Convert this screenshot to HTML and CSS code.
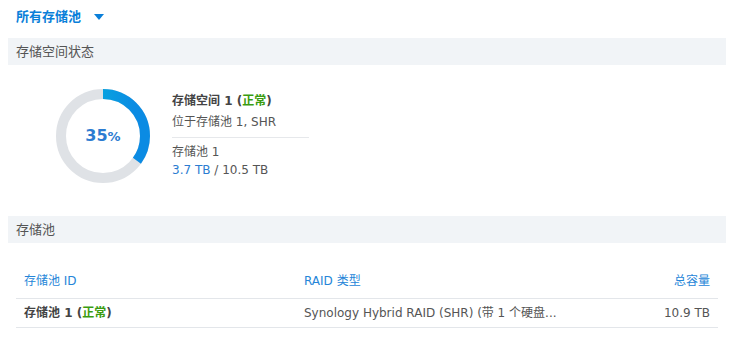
FILE: index.html
```html
<!DOCTYPE html>
<html lang="zh-CN">
<head>
    <meta charset="UTF-8">
    <title>存储池</title>
    <link rel="stylesheet" href="styles.css">
</head>
<body>
    <div class="page">
        <div class="title">
            <span>所有存储池</span>
            <span class="caret"></span>
        </div>

        <div class="section-head">存储空间状态</div>
        <div class="status">
            <div class="donut">
                <svg width="96" height="96" viewBox="0 0 96 96">
                    <defs>
                        <linearGradient id="arcGrad" gradientUnits="userSpaceOnUse" x1="0" y1="4" x2="0" y2="80">
                            <stop offset="0" stop-color="#03bfdc"/>
                            <stop offset="1" stop-color="#0b8be3"/>
                        </linearGradient>
                    </defs>
                    <circle cx="48" cy="48" r="42" fill="none" stroke="#dfe2e6" stroke-width="10"/>
                    <circle cx="48" cy="48" r="42" fill="none" stroke="url(#arcGrad)" stroke-width="10"
                            stroke-dasharray="92.36 263.89" transform="rotate(-90 48 48)"/>
                </svg>
                <div class="pct">35<small>%</small></div>
            </div>
            <div class="info">
                <div class="vol-name">存储空间 1 (<span class="ok">正常</span>)</div>
                <div class="vol-sub">位于存储池 1, SHR</div>
                <div class="divider"></div>
                <div>存储池 1</div>
                <div><span class="used">3.7 TB</span> / 10.5 TB</div>
            </div>
        </div>

        <div class="section-head">存储池</div>
        <table class="pool-table">
            <thead>
                <tr>
                    <th class="col-id">存储池 ID</th>
                    <th class="col-raid">RAID 类型</th>
                    <th class="col-size">总容量</th>
                </tr>
            </thead>
            <tbody>
                <tr>
                    <td class="pool-name">存储池 1 (<span class="ok">正常</span>)</td>
                    <td>Synology Hybrid RAID (SHR) (带 1 个硬盘...</td>
                    <td class="col-size">10.9 TB</td>
                </tr>
            </tbody>
        </table>
    </div>
</body>
</html>
```

FILE: styles.css
```css
body {
    margin: 0;
    font-family: "DejaVu Sans", "Noto Sans CJK SC", sans-serif;
    font-size: 12px;
    color: #444;
    background: #fff;
}
.page {
    padding: 0 3px 0 8px;
}
.title {
    height: 34px;
    margin-bottom: 4px;
    padding-left: 8px;
    display: flex;
    align-items: center;
    line-height: 16px;
    color: #0a7fd9;
    font-size: 13px;
    font-weight: bold;
}
.caret {
    width: 0;
    height: 0;
    margin-left: 13px;
    border-left: 5px solid transparent;
    border-right: 5px solid transparent;
    border-top: 6px solid #0a7fd9;
}
.section-head {
    height: 27px;
    line-height: 27px;
    padding-left: 8px;
    background: #f1f4f7;
    color: #555;
    font-size: 13px;
}
.status {
    display: flex;
    align-items: flex-start;
    height: 151px;
    padding: 23px 0 0 47px;
    box-sizing: border-box;
}
.donut {
    position: relative;
    width: 96px;
    height: 96px;
}
.donut svg {
    display: block;
}
.pct {
    position: absolute;
    top: 0;
    left: 0;
    width: 96px;
    line-height: 96px;
    text-align: center;
    color: #2c7cd1;
    font-size: 16px;
    font-weight: bold;
}
.pct small {
    font-size: 13px;
}
.info {
    margin-left: 21px;
    padding-top: 4px;
    line-height: 18px;
    color: #555;
}
.vol-name {
    font-weight: bold;
    color: #444;
    margin-bottom: 3px;
}
.vol-sub {
    margin-bottom: 6px;
}
.divider {
    width: 137px;
    border-top: 1px solid #e6e8eb;
    margin-bottom: 5px;
}
.ok {
    color: #3a9c10;
}
.used {
    color: #2c7cd1;
}
.pool-table {
    margin: 14px 0 0 8px;
    width: 702px;
    border-collapse: collapse;
    line-height: 16px;
}
.pool-table th {
    height: 32px;
    padding: 0 8px 9px;
    text-align: left;
    vertical-align: bottom;
    font-weight: normal;
    color: #2585d8;
    border-bottom: 1px solid #e3e6ea;
}
.pool-table td {
    height: 28px;
    padding: 0 8px;
    color: #555;
    vertical-align: middle;
    border-bottom: 1px solid #e3e6ea;
}
.pool-table .col-id {
    width: 264px;
}
.pool-table .col-size {
    text-align: right;
}
.pool-table .pool-name {
    font-weight: bold;
    color: #444;
}
```
